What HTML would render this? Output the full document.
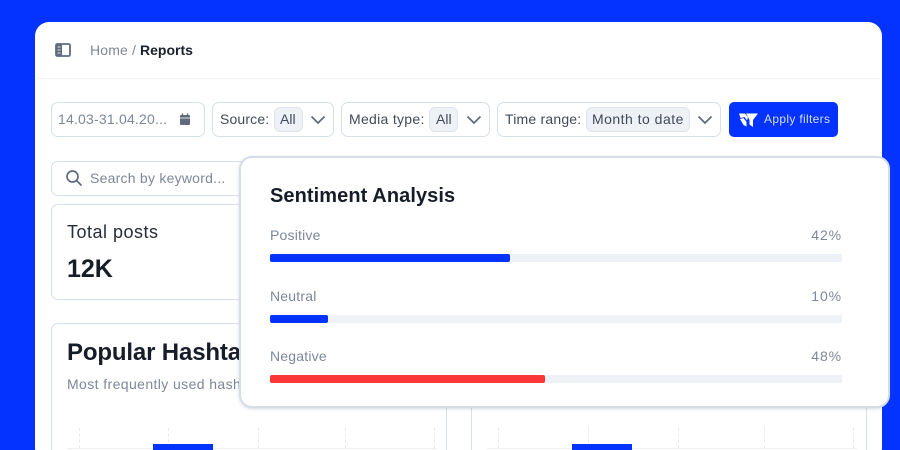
<!DOCTYPE html>
<html lang="en">
<head>
<meta charset="utf-8">
<title>Reports</title>
<style>
html,body{margin:0;padding:0;width:900px;height:450px;overflow:hidden}
body{background:#0433ff;position:relative;font-family:"Liberation Sans",sans-serif;color:#111827}
div,span,svg{position:absolute;box-sizing:border-box}
#root{left:0;top:0;width:900px;height:450px;overflow:hidden}
.t{white-space:nowrap;line-height:1}
.box{background:#fff;border:1px solid #d9dfe8;border-radius:7px}
.chip{background:#eef1f6;border:1px solid #dfe4ec;border-radius:6px}
.track{background:#eef1f6;left:270px;width:572px;height:8px;border-radius:1px}
.fill{left:270px;height:8px;border-radius:2px}
.dash{width:0;border-left:1px dashed #e5e8ee}
.g{color:#7d8798}
.d{color:#414a58}
</style>
</head>
<body>
<div id="root">
<div style="left:35px;top:22px;width:847px;height:440px;background:#fff;border-radius:14px"></div>
<div style="left:36px;top:78px;width:845px;height:1px;background:#f1f3f6"></div>

<svg style="left:55px;top:43px" width="16" height="14" viewBox="0 0 16 14"><rect x="1" y="1" width="14" height="12" rx="1.500" fill="none" stroke="#5f6b7c" stroke-width="1.800"/><rect x="1" y="1" width="6" height="12" fill="#5f6b7c"/><path d="M2.500 4h3M2.500 7h3M2.500 10h3" stroke="#dfe3e9" stroke-width="1"/></svg>
<span class="t g" style="left:90px;top:43px;font-size:14px;letter-spacing:.15px">Home</span>
<span class="t g" style="left:132px;top:43px;font-size:14px">/</span>
<span class="t" style="left:140px;top:43px;font-size:14px;font-weight:700;color:#1a202c">Reports</span>

<div class="box" style="left:51px;top:102px;width:154px;height:35px"></div>
<span class="t g" style="left:58px;top:112px;font-size:14px;letter-spacing:.2px">14.03-31.04.20...</span>
<svg style="left:179px;top:113px" width="12" height="13" viewBox="0 0 12 13"><rect x="1" y="2" width="10" height="10" rx="1" fill="#5f6b7c"/><path d="M3.500 .5v3M8.500 .5v3" stroke="#5f6b7c" stroke-width="1.400"/><path d="M1 5h10" stroke="#fff" stroke-width=".8"/></svg>

<div class="box" style="left:212px;top:102px;width:122px;height:35px"></div>
<span class="t d" style="left:220px;top:112px;font-size:14px;letter-spacing:.15px">Source:</span>
<div class="chip" style="left:274px;top:107px;width:29px;height:25px"></div>
<span class="t d" style="left:280px;top:112px;font-size:14px">All</span>
<svg style="left:310px;top:115px" width="16" height="10" viewBox="0 0 16 10"><path d="M1.500 1.500L8 8l6.500-6.500" fill="none" stroke="#5f6b7c" stroke-width="1.700"/></svg>

<div class="box" style="left:341px;top:102px;width:149px;height:35px"></div>
<span class="t d" style="left:349px;top:112px;font-size:14px;letter-spacing:.3px">Media type:</span>
<div class="chip" style="left:429px;top:107px;width:29px;height:25px"></div>
<span class="t d" style="left:436px;top:112px;font-size:14px">All</span>
<svg style="left:466px;top:115px" width="16" height="10" viewBox="0 0 16 10"><path d="M1.500 1.500L8 8l6.500-6.500" fill="none" stroke="#5f6b7c" stroke-width="1.700"/></svg>

<div class="box" style="left:497px;top:102px;width:224px;height:35px"></div>
<span class="t d" style="left:505px;top:112px;font-size:14px;letter-spacing:.2px">Time range:</span>
<div class="chip" style="left:586px;top:107px;width:104px;height:25px"></div>
<span class="t d" style="left:592px;top:112px;font-size:14px;letter-spacing:.48px">Month to date</span>
<svg style="left:697px;top:115px" width="16" height="10" viewBox="0 0 16 10"><path d="M1.500 1.500L8 8l6.500-6.500" fill="none" stroke="#5f6b7c" stroke-width="1.700"/></svg>

<div style="left:729px;top:102px;width:109px;height:35px;background:#0433ff;border-radius:5px"></div>
<svg style="left:738px;top:112px" width="21" height="16" viewBox="0 0 21 16"><path d="M1 1.500h6l3 4L9 8.500 6.500 5 2.500 6zM2 7l3.500-1 3 4v4.500L5.500 13zM8 1.500h12l-5 6.500v7l-3.500-2.500V8z" fill="#fff"/></svg>
<span class="t" style="left:764px;top:113px;font-size:12px;letter-spacing:.33px;color:#d5dcff">Apply filters</span>

<div class="box" style="left:51px;top:161px;width:240px;height:35px"></div>
<svg style="left:65px;top:169px" width="18" height="18" viewBox="0 0 18 18"><circle cx="7.500" cy="7.500" r="5.500" fill="none" stroke="#5f6b7c" stroke-width="1.700"/><path d="M11.500 11.500L16.500 16.500" stroke="#5f6b7c" stroke-width="1.700"/></svg>
<span class="t g" style="left:90px;top:171px;font-size:14px;letter-spacing:.24px">Search by keyword...</span>

<div class="box" style="left:51px;top:204px;width:240px;height:96px"></div>
<span class="t" style="left:67px;top:223px;font-size:18px;letter-spacing:.5px;color:#262d38">Total posts</span>
<span class="t" style="left:67px;top:257px;font-size:25px;font-weight:700;color:#171d28">12K</span>

<div class="box" style="left:51px;top:323px;width:396px;height:140px"></div>
<span class="t" style="left:67px;top:341px;font-size:24px;font-weight:700;letter-spacing:-.15px;color:#171d28">Popular Hashtags</span>
<span class="t g" style="left:67px;top:377px;font-size:14px;letter-spacing:.4px">Most frequently used hashtags</span>
<div class="dash" style="left:79px;top:428px;height:20px"></div>
<div class="dash" style="left:168px;top:428px;height:20px"></div>
<div class="dash" style="left:258px;top:428px;height:20px"></div>
<div class="dash" style="left:345px;top:428px;height:20px"></div>
<div class="dash" style="left:434px;top:428px;height:20px"></div>
<div style="left:67px;top:448px;width:370px;height:1px;background:#eef0f4"></div>
<div style="left:153px;top:444px;width:60px;height:6px;background:#0433ff"></div>

<div class="box" style="left:471px;top:380px;width:396px;height:90px"></div>
<div class="dash" style="left:498px;top:428px;height:20px"></div>
<div class="dash" style="left:588px;top:428px;height:20px"></div>
<div class="dash" style="left:678px;top:428px;height:20px"></div>
<div class="dash" style="left:764px;top:428px;height:20px"></div>
<div class="dash" style="left:853px;top:428px;height:20px"></div>
<div style="left:487px;top:448px;width:370px;height:1px;background:#eef0f4"></div>
<div style="left:572px;top:444px;width:60px;height:6px;background:#0433ff"></div>

<div style="left:239px;top:156px;width:651px;height:252px;background:#fff;border:2px solid #d6dde7;border-radius:13px;box-shadow:0 1px 3px rgba(100,115,140,.25)"></div>
<span class="t" style="left:270px;top:186px;font-size:20px;font-weight:700;letter-spacing:.08px;color:#171d28">Sentiment Analysis</span>

<span class="t g" style="left:270px;top:228px;font-size:14px;letter-spacing:.2px">Positive</span>
<span class="t g" style="right:58px;top:228px;font-size:14px;letter-spacing:.9px">42%</span>
<div class="track" style="top:254px"></div>
<div class="fill" style="top:254px;width:240px;background:#0433ff"></div>

<span class="t g" style="left:270px;top:289px;font-size:14px;letter-spacing:.2px">Neutral</span>
<span class="t g" style="right:58px;top:289px;font-size:14px;letter-spacing:.9px">10%</span>
<div class="track" style="top:315px"></div>
<div class="fill" style="top:315px;width:58px;background:#0433ff"></div>

<span class="t g" style="left:270px;top:349px;font-size:14px;letter-spacing:.2px">Negative</span>
<span class="t g" style="right:58px;top:349px;font-size:14px;letter-spacing:.9px">48%</span>
<div class="track" style="top:375px"></div>
<div class="fill" style="top:375px;width:275px;background:#ff3636"></div>
</div>
</body>
</html>
